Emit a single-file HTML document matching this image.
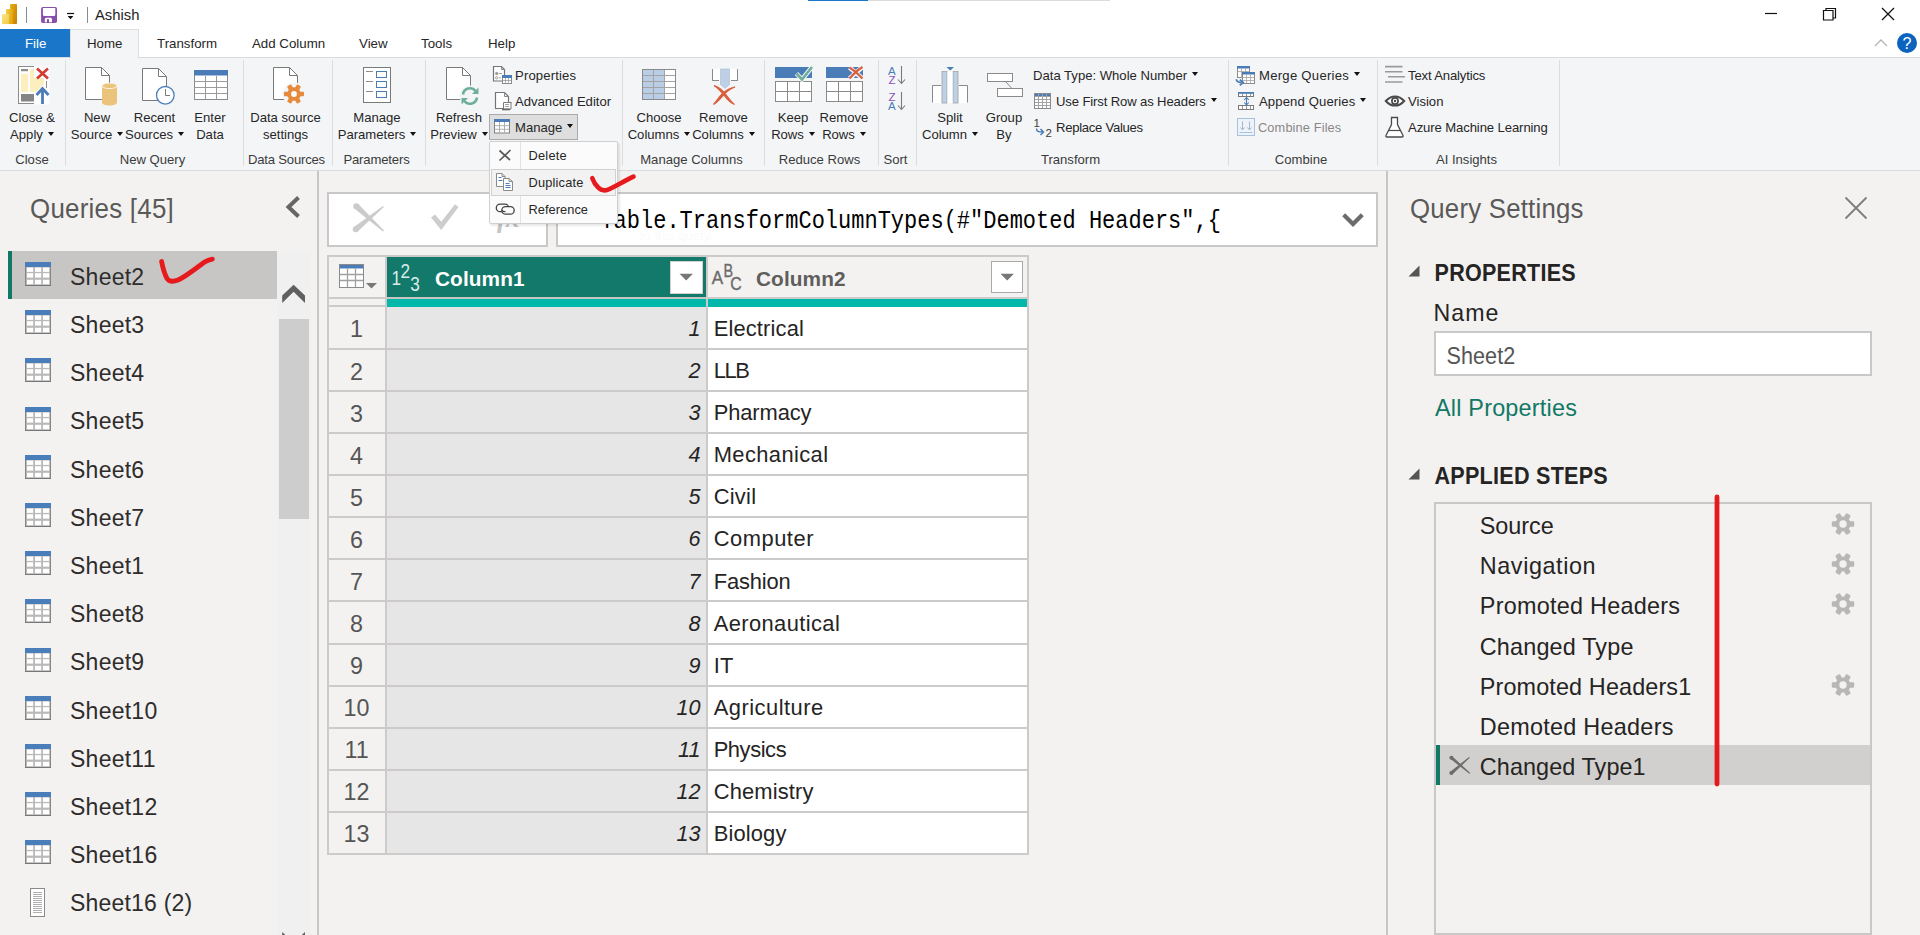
<!DOCTYPE html>
<html lang="en">
<head>
<meta charset="utf-8">
<title>Power Query Editor</title>
<style>
*{box-sizing:border-box;margin:0;padding:0}
html,body{width:1920px;height:935px;overflow:hidden;background:#f3f2f1}
body{position:relative;font-family:"Liberation Sans",sans-serif;color:#252423}
.a{position:absolute}
.t{position:absolute;white-space:nowrap;line-height:20px;height:20px}
/* ribbon text */
.r{font-size:13.1px;color:#262626}
.rc{position:absolute;text-align:center;white-space:nowrap;font-size:13.1px;line-height:17px;color:#262626}
.gl{position:absolute;text-align:center;white-space:nowrap;font-size:13.1px;line-height:20px;color:#3b3b3b}
.sep{position:absolute;top:60px;height:106px;width:1px;background:#dcdddf}
.dd{display:inline-block;width:0;height:0;border-left:3.5px solid transparent;border-right:3.5px solid transparent;border-top:4px solid #111;vertical-align:middle;margin-left:5px;position:relative;top:-2px}
svg{position:absolute;overflow:visible}
/* queries list */
.q{position:absolute;left:70px;font-size:23px;letter-spacing:0.25px;line-height:30px;height:30px;white-space:nowrap;color:#2e2d2c}
/* table */
.idx{position:absolute;left:328px;width:57px;text-align:center;font-size:23.3px;line-height:30px;color:#555}
.c1{position:absolute;left:387px;width:313.5px;text-align:right;font-size:21.6px;line-height:30px;font-style:italic;color:#252423}
.c2{position:absolute;left:713.7px;font-size:21.9px;letter-spacing:0.15px;line-height:30px;color:#252423;white-space:nowrap}
.hl{position:absolute;left:329px;width:698px;height:2px;background:#cfcfcf}
.st{position:absolute;left:1481px;font-size:22.2px;line-height:30px;white-space:nowrap;color:#252423}
</style>
</head>
<body>
<!-- ===== title bar ===== -->
<div class="a" id="titlebar" style="left:0;top:0;width:1920px;height:30px;background:#fff"></div>
<div class="a" style="left:808px;top:0;width:60px;height:1px;background:#1976c8"></div>
<div class="a" style="left:868px;top:0;width:242px;height:1px;background:#dcdcdc"></div>
<div class="a" style="left:26px;top:7px;width:1px;height:16px;background:#8a8a8a"></div>
<div class="a" style="left:87px;top:7px;width:1px;height:16px;background:#8a8a8a"></div>
<div class="t" style="left:95px;top:5px;font-size:14.8px;color:#1e1e1e">Ashish</div>

<!-- ===== tab row ===== -->
<div class="a" style="left:0;top:30px;width:1920px;height:27px;background:#fff"></div>
<div class="a" style="left:0;top:57px;width:1920px;height:1px;background:#d9dadb"></div>
<div class="a" style="left:0;top:29px;width:70px;height:28px;background:#1976c8"></div>
<div class="a" style="left:70px;top:29px;width:69px;height:29px;background:#f4f5f7;border:1px solid #dcddde;border-bottom:none"></div>
<div class="t" style="left:25px;top:34px;font-size:13.3px;color:#fff">File</div>
<div class="t" style="left:87px;top:34px;font-size:13.3px;color:#262626">Home</div>
<div class="t" style="left:157px;top:34px;font-size:13.3px;color:#262626">Transform</div>
<div class="t" style="left:252px;top:34px;font-size:13.3px;color:#262626">Add Column</div>
<div class="t" style="left:359px;top:34px;font-size:13.3px;color:#262626">View</div>
<div class="t" style="left:421px;top:34px;font-size:13.3px;color:#262626">Tools</div>
<div class="t" style="left:488px;top:34px;font-size:13.3px;color:#262626">Help</div>

<!-- ===== ribbon ===== -->
<div class="a" id="ribbon" style="left:0;top:58px;width:1920px;height:112px;background:#f4f5f7"></div>
<div class="a" style="left:0;top:170px;width:1920px;height:1px;background:#dadbdc"></div>
<div class="sep" style="left:65px"></div>
<div class="sep" style="left:243px"></div>
<div class="sep" style="left:332px"></div>
<div class="sep" style="left:425px"></div>
<div class="sep" style="left:622px"></div>
<div class="sep" style="left:764px"></div>
<div class="sep" style="left:878px"></div>
<div class="sep" style="left:916px"></div>
<div class="sep" style="left:1228px"></div>
<div class="sep" style="left:1377px"></div>
<div class="sep" style="left:1559px"></div>

<!-- ribbon text -->
<div class="t r" style="left:515px;top:117.5px;z-index:3">Manage<i class="dd"></i></div>
<div class="rc" style="left:-28px;top:109px;width:120px">Close &amp;<br>Apply<i class="dd"></i></div>
<div class="rc" style="left:37px;top:109px;width:120px">New<br>Source<i class="dd"></i></div>
<div class="rc" style="left:94.5px;top:109px;width:120px">Recent<br>Sources<i class="dd"></i></div>
<div class="rc" style="left:150px;top:109px;width:120px">Enter<br>Data</div>
<div class="rc" style="left:225.5px;top:109px;width:120px">Data source<br>settings</div>
<div class="rc" style="left:317px;top:109px;width:120px">Manage<br>Parameters<i class="dd"></i></div>
<div class="rc" style="left:399px;top:109px;width:120px">Refresh<br>Preview<i class="dd"></i></div>
<div class="rc" style="left:599px;top:109px;width:120px">Choose<br>Columns<i class="dd"></i></div>
<div class="rc" style="left:663.5px;top:109px;width:120px">Remove<br>Columns<i class="dd"></i></div>
<div class="rc" style="left:733px;top:109px;width:120px">Keep<br>Rows<i class="dd"></i></div>
<div class="rc" style="left:784px;top:109px;width:120px">Remove<br>Rows<i class="dd"></i></div>
<div class="rc" style="left:890px;top:109px;width:120px">Split<br>Column<i class="dd"></i></div>
<div class="rc" style="left:944px;top:109px;width:120px">Group<br>By</div>
<div class="gl" style="left:-38px;top:150px;width:140px">Close</div>
<div class="gl" style="left:82.5px;top:150px;width:140px">New Query</div>
<div class="gl" style="left:216.5px;top:150px;width:140px;letter-spacing:-0.2px">Data Sources</div>
<div class="gl" style="left:306.5px;top:150px;width:140px;letter-spacing:-0.15px">Parameters</div>
<div class="gl" style="left:621.5px;top:150px;width:140px">Manage Columns</div>
<div class="gl" style="left:749.5px;top:150px;width:140px">Reduce Rows</div>
<div class="gl" style="left:825.5px;top:150px;width:140px">Sort</div>
<div class="gl" style="left:1000.5px;top:150px;width:140px">Transform</div>
<div class="gl" style="left:1231px;top:150px;width:140px">Combine</div>
<div class="gl" style="left:1396.5px;top:150px;width:140px">AI Insights</div>
<div class="t r" style="left:515px;top:65.5px;letter-spacing:0.15px">Properties</div>
<div class="t r" style="left:515px;top:91.5px">Advanced Editor</div>
<div class="t r" style="left:1033px;top:65.5px">Data Type: Whole Number<i class="dd"></i></div>
<div class="t r" style="left:1056px;top:91.5px;letter-spacing:-0.13px">Use First Row as Headers<i class="dd"></i></div>
<div class="t r" style="left:1056px;top:117.5px;letter-spacing:-0.28px">Replace Values</div>
<div class="t r" style="left:1259px;top:65.5px;letter-spacing:0.27px">Merge Queries<i class="dd"></i></div>
<div class="t r" style="left:1259px;top:91.5px;letter-spacing:0.13px">Append Queries<i class="dd"></i></div>
<div class="t r" style="left:1258px;top:117.5px;color:#8a8787;font-size:12.800px;letter-spacing:0.12px">Combine Files</div>
<div class="t r" style="left:1408px;top:65.5px;letter-spacing:-0.15px">Text Analytics</div>
<div class="t r" style="left:1408px;top:91.5px">Vision</div>
<div class="t r" style="left:1408px;top:117.5px;letter-spacing:-0.1px">Azure Machine Learning</div>

<svg id="ico" width="1920" height="172" viewBox="0 0 1920 172" style="left:0;top:0">
<defs>
<linearGradient id="pb1" x1="0" y1="0" x2="1" y2="0.300"><stop offset="0" stop-color="#f4d045"/><stop offset="1" stop-color="#e4a813"/></linearGradient>
<linearGradient id="pb2" x1="0" y1="0" x2="1" y2="0.600"><stop offset="0" stop-color="#e9ad12"/><stop offset="1" stop-color="#cc850a"/></linearGradient>
<linearGradient id="pb0" x1="0" y1="0" x2="1" y2="1"><stop offset="0" stop-color="#f8e58a"/><stop offset="1" stop-color="#f1cb42"/></linearGradient>
</defs>
<!-- power bi logo -->
<rect x="10.100" y="4" width="6.900" height="20" rx="0.800" fill="url(#pb2)"/>
<rect x="6" y="8.900" width="6.900" height="15.100" rx="0.800" fill="url(#pb1)"/>
<rect x="2" y="14" width="6.900" height="10" rx="0.800" fill="url(#pb0)"/>
<!-- save -->
<rect x="41.100" y="6.900" width="15.900" height="16.100" rx="1.800" fill="#8750ad"/>
<path d="M42.900 8h12.400v6.400a1.500 1.500 0 0 1 -1.500 1.500h-9.400a1.500 1.500 0 0 1 -1.500 -1.500z" fill="#fff"/>
<path d="M44.800 22.200v-2.900a1.500 1.500 0 0 1 1.500 -1.500h4.200a1.500 1.500 0 0 1 1.500 1.500v2.900h-3v-2.600a0.700 0.700 0 0 0 -0.700 -0.700h-0.700a0.700 0.700 0 0 0 -0.700 0.700v2.600z" fill="#fff"/>
<!-- qat dropdown -->
<rect x="67" y="12.900" width="7.100" height="1.200" fill="#111"/>
<path d="M67.600 16h5.800l-2.900 3.200z" fill="#111"/>
<!-- window controls -->
<path d="M1765 13.500h12" stroke="#111" stroke-width="1.200" fill="none"/>
<path d="M1823.500 10.500h9.500v9.500h-9.500zM1826 10.500v-2h9.500v9.500h-2.500" stroke="#111" stroke-width="1.200" fill="none"/>
<path d="M1882 8l12 12M1894 8l-12 12" stroke="#111" stroke-width="1.300" fill="none"/>
<path d="M1875 46l6-6 6 6" stroke="#b4b4b4" stroke-width="1.300" fill="none"/>
<circle cx="1907" cy="43" r="10" fill="#0b63be"/>
<text x="1907" y="48.800" text-anchor="middle" font-family="Liberation Sans, sans-serif" font-size="16" fill="#fff">?</text>

<!-- Close & Apply -->
<rect x="18.500" y="66.500" width="16" height="37" fill="#fdfdfd" stroke="#8c8c8c" stroke-width="1"/>
<rect x="34" y="66" width="15.500" height="38.500" fill="#fdfdfd"/>
<rect x="21" y="74" width="7" height="18" fill="#fdeebd"/>
<path d="M30 69h4v9h10v6l-8 8h-6z" fill="#fdeebd"/>
<rect x="21" y="69" width="7" height="2.200" fill="#8c8c8c"/>
<rect x="21" y="94" width="13" height="7.500" fill="#858585"/>
<path d="M37 68.500l11 10M48 68.500l-11 10" stroke="#d33a34" stroke-width="2.600" fill="none"/>
<path d="M36.500 95l6-6.500 6 6.500M42.500 89.500v14.500" stroke="#4a7db8" stroke-width="2.800" fill="none"/>
<path d="M46.500 81v7" stroke="#8c8c8c" stroke-width="1"/>

<!-- New Source : page + cylinder -->
<path d="M85.500 67.500h16l8 8v24h-24z" fill="#fff" stroke="#7a7a7a" stroke-width="1"/>
<path d="M101.500 67.500v8h8" fill="none" stroke="#7a7a7a" stroke-width="1"/>
<path d="M102 86v16.500c0 1.700 3.400 3 7.500 3s7.500-1.300 7.500-3v-16.500z" fill="#e9c47a"/>
<ellipse cx="109.500" cy="85.800" rx="7.500" ry="2.800" fill="#eac57c" stroke="#fdf6e6" stroke-width="1"/>
<!-- Recent Sources : page + clock -->
<path d="M142.500 68.500h16l8 8v24h-24z" fill="#fff" stroke="#7a7a7a" stroke-width="1"/>
<path d="M158.500 68.500v8h8" fill="none" stroke="#7a7a7a" stroke-width="1"/>
<circle cx="165.300" cy="95.300" r="8.800" fill="#fff" stroke="#4c80bd" stroke-width="1.300"/>
<path d="M165.500 89v6.500h4.500" fill="none" stroke="#7a7a7a" stroke-width="1"/>
<!-- Enter Data : table -->
<rect x="194.500" y="70.500" width="33" height="29" fill="#fff" stroke="#8a8a8a" stroke-width="1"/>
<rect x="194" y="70" width="34" height="5.500" fill="#4a7db8"/>
<path d="M194.500 81.500h33M194.500 87.500h33M194.500 93.500h33M205.500 76v23.500M216.500 76v23.500" stroke="#9a9a9a" stroke-width="1" fill="none"/>

<!-- Data source settings : page + gear -->
<path d="M273.500 67.500h16l8 8v24h-24z" fill="#fff" stroke="#7a7a7a" stroke-width="1"/>
<path d="M289.500 67.500v8h8" fill="none" stroke="#7a7a7a" stroke-width="1"/>
<circle cx="294" cy="94" r="11.500" fill="#f4f5f7"/>
<g transform="translate(294 94) rotate(90)" fill="#e68a3c">
<circle r="6.800"/>
<rect x="-2.300" y="-10" width="4.600" height="20" rx="0.800"/>
<rect x="-2.300" y="-10" width="4.600" height="20" rx="0.800" transform="rotate(60)"/>
<rect x="-2.300" y="-10" width="4.600" height="20" rx="0.800" transform="rotate(120)"/>
<circle r="2.900" fill="#fff"/>
</g>
<rect x="283" y="83" width="0" height="0"/>

<!-- Manage Parameters -->
<rect x="363.500" y="67.500" width="27" height="35" fill="#fff" stroke="#7a7a7a" stroke-width="1"/>
<path d="M366 71.500h7M366 81.500h7M366 91.500h7" stroke="#8c8c8c" stroke-width="1" fill="none"/>
<rect x="376.500" y="71.500" width="10" height="6" fill="#fff" stroke="#4a7db8" stroke-width="1"/>
<rect x="376.500" y="81.500" width="10" height="6" fill="#fff" stroke="#4a7db8" stroke-width="1"/>
<rect x="376.500" y="91.500" width="10" height="6" fill="#fff" stroke="#4a7db8" stroke-width="1"/>

<!-- Refresh Preview -->
<path d="M446.500 67.500h16l8 8v24h-24z" fill="#fff" stroke="#7a7a7a" stroke-width="1"/>
<path d="M462.500 67.500v8h8" fill="none" stroke="#7a7a7a" stroke-width="1"/>
<circle cx="470" cy="96" r="10.500" fill="#f4f5f7"/>
<path d="M463 94.500a7 7 0 0 1 12.500-3.500" fill="none" stroke="#6fae9b" stroke-width="2.600"/>
<path d="M478.500 87.500v6.500h-6.500z" fill="#6fae9b"/>
<path d="M477 97.500a7 7 0 0 1 -12.500 3.500" fill="none" stroke="#6fae9b" stroke-width="2.600"/>
<path d="M461.500 104.500v-6.500h6.500z" fill="#6fae9b"/>
<!-- Properties small icon -->
<path d="M493.500 66.500h8l3 3v11.500h-11z" fill="#fff" stroke="#747474" stroke-width="1.200"/>
<path d="M501.500 66.500v3h3" fill="none" stroke="#8a8a8a"/>
<circle cx="496.700" cy="73.500" r="1.300" fill="#9a9a9a" stroke="#8a8a8a" stroke-width="0.600"/>
<circle cx="496.700" cy="77.800" r="1.200" fill="none" stroke="#8a8a8a" stroke-width="0.800"/>
<path d="M499 73.500h3M499 77.800h2" stroke="#8a8a8a" stroke-width="0.800"/>
<rect x="502.500" y="75.500" width="9" height="8" fill="#fff" stroke="#8a8a8a" stroke-width="1"/>
<rect x="502" y="75" width="10" height="3" fill="#4a7db8"/>
<path d="M505.500 78v5.500M508.500 78v5.500M502.500 80.500h9" stroke="#9a9a9a" stroke-width="0.800"/>
<!-- Advanced Editor small icon -->
<path d="M495.500 92.500h9l4 4v12h-13z" fill="#fff" stroke="#747474" stroke-width="1.200"/>
<path d="M504.500 92.500v4h4" fill="none" stroke="#8a8a8a"/>
<path d="M503.500 102.500h7.500v6.500h-7.500z" fill="#fff" stroke="#7a7a7a" stroke-width="1"/>
<path d="M505 104.500h4M505 106.500h4" stroke="#8a8a8a" stroke-width="0.800"/>
<path d="M502 109.500h8" stroke="#6a6a6a" stroke-width="1.600"/>
<path d="M508 102.500h3.500" stroke="#7a7a7a" stroke-width="1"/>
<!-- Manage button -->
<rect x="489.500" y="114.500" width="88" height="25" fill="#dddedd" stroke="#a9aaab" stroke-width="1"/>
<rect x="494.500" y="119.500" width="15" height="13.500" fill="#fff" stroke="#808080" stroke-width="1"/>
<rect x="494" y="119" width="16" height="3" fill="#4a7db8"/>
<path d="M494.500 125.700h15M494.500 129.300h15M499.500 122v10.500M504.500 122v10.500" stroke="#a6a6a6" stroke-width="0.900"/>

<!-- Choose Columns -->
<rect x="642.500" y="69.500" width="33" height="30" fill="#fff" stroke="#8a8a8a" stroke-width="1"/>
<rect x="643" y="70" width="22" height="29" fill="#b9cee6"/>
<path d="M642.500 75.500h33M642.500 81.500h33M642.500 87.500h33M642.500 93.500h33M653.500 70v29.500M664.500 70v29.500" stroke="#a3a3a3" stroke-width="1" fill="none"/>
<rect x="642.500" y="69.500" width="33" height="30" fill="none" stroke="#8a8a8a" stroke-width="1"/>
<!-- Remove Columns -->
<path d="M712.500 69.500v11h6.500M737.500 69.500v11h-6.500" fill="#fff" stroke="#8a8a8a" stroke-width="1"/>
<rect x="713" y="69" width="24" height="11" fill="#fff"/>
<path d="M712.500 69v11.500h6M737.500 69v11.500h-6" fill="none" stroke="#8a8a8a" stroke-width="1"/>
<path d="M720.500 69v15.500l4.500 4 4.500-4v-15.500z" fill="#bdd0e6" stroke="#a9b9cc" stroke-width="0.600"/>
<path d="M714 85.500c4 1 8 4 11.500 8.500c3 4 6 8 9 10.500c-3-1-6-3.500-9.500-8c-3.500-4.500-7-8.500-11-11z" fill="#d9603e" stroke="#d9603e" stroke-width="1.200"/>
<path d="M735 87c-5 2-9 5-12 8.500c-3 3.500-6 7-9.500 9c3-3.500 5-7 8.500-10.500c3.500-3.500 8-6 13-7z" fill="#d9603e" stroke="#d9603e" stroke-width="1.200"/>

<!-- Keep Rows -->
<rect x="775" y="67" width="37" height="11" fill="#4a7db8"/>
<rect x="775.500" y="81.500" width="36" height="20" fill="#fff" stroke="#8a8a8a" stroke-width="1"/>
<path d="M775.500 91.500h36M787.500 81.500v20M799.500 81.500v20" stroke="#8a8a8a" stroke-width="1"/>
<path d="M796.500 73.500l5.500 6 10-12.500" fill="none" stroke="#f4f5f7" stroke-width="4.500"/>
<path d="M796.500 73.500l5.500 6 10-12.500" fill="none" stroke="#6fae9b" stroke-width="2.600"/>
<!-- Remove Rows -->
<rect x="826" y="67" width="37" height="11" fill="#4a7db8"/>
<rect x="826.500" y="81.500" width="36" height="20" fill="#fff" stroke="#8a8a8a" stroke-width="1"/>
<path d="M826.500 91.500h36M838.500 81.500v20M850.500 81.500v20" stroke="#8a8a8a" stroke-width="1"/>
<path d="M849.500 67.500l13 11M862.500 67l-13 11.500" fill="none" stroke="#f4f5f7" stroke-width="4.500"/>
<path d="M849.500 67.500c5 3 9 6.500 13 11M862.500 67c-5 3-9 7-13 11.500" fill="none" stroke="#d9603e" stroke-width="2.200"/>

<!-- Sort -->
<text x="888" y="75" font-family="Liberation Sans, sans-serif" font-size="11.500" fill="#4a7db8">A</text>
<text x="888.500" y="84" font-family="Liberation Sans, sans-serif" font-size="11.500" fill="#8b50b7">Z</text>
<path d="M901.500 66v17M898 79.500l3.500 4 3.500-4" fill="none" stroke="#7a7a7a" stroke-width="1.100"/>
<text x="888.500" y="100.500" font-family="Liberation Sans, sans-serif" font-size="11.500" fill="#8b50b7">Z</text>
<text x="888" y="110" font-family="Liberation Sans, sans-serif" font-size="11.500" fill="#4a7db8">A</text>
<path d="M901.500 92v17M898 105.500l3.500 4 3.500-4" fill="none" stroke="#7a7a7a" stroke-width="1.100"/>

<!-- Split Column -->
<path d="M932.500 102.500v-17h8.500M967.500 102.500v-17h-8.500" fill="none" stroke="#8a8a8a" stroke-width="1"/>
<rect x="933" y="86" width="8" height="17" fill="#fff"/>
<rect x="959" y="86" width="8" height="17" fill="#fff"/>
<rect x="942" y="71.500" width="5" height="31.500" fill="#bdd0e6" stroke="#a3a3a3" stroke-width="0.800"/>
<rect x="953" y="71.500" width="5" height="31.500" fill="#bdd0e6" stroke="#a3a3a3" stroke-width="0.800"/>
<rect x="947.500" y="71" width="5" height="32" fill="#fff"/>
<path d="M946.500 67h7.500l-3.750 3.500z" fill="#4a7db8"/>
<!-- Group By -->
<rect x="987.500" y="73.500" width="25" height="8" fill="#fff" stroke="#8a8a8a" stroke-width="1"/>
<rect x="997.500" y="88.500" width="25" height="8" fill="#fff" stroke="#8a8a8a" stroke-width="1"/>
<path d="M1005.500 81.500l6 6.500" stroke="#8a8a8a" stroke-width="1" fill="none"/>
<!-- Use First Row as Headers icon -->
<rect x="1034.500" y="93.500" width="16" height="15" fill="#fff" stroke="#8a8a8a" stroke-width="1"/>
<rect x="1035" y="94" width="15" height="2.500" fill="#4a7db8"/>
<path d="M1034.500 96.500h16M1034.500 99.500h16M1034.500 102.500h16M1034.500 105.500h16M1038.500 94v14.500M1042.500 94v14.500M1046.500 94v14.500" stroke="#a3a3a3" stroke-width="1" fill="none"/>
<rect x="1034.500" y="93.500" width="16" height="15" fill="none" stroke="#8a8a8a" stroke-width="1"/>
<!-- Replace Values icon -->
<text x="1033.500" y="126.500" font-family="Liberation Sans, sans-serif" font-size="11.500" fill="#3a3a3a">1</text>
<text x="1045.500" y="136.500" font-family="Liberation Sans, sans-serif" font-size="11.500" fill="#3a3a3a">2</text>
<path d="M1036.500 128.500c0 3 2 3.500 6.500 3.500M1040.500 129l3 3-3 3" fill="none" stroke="#4a7db8" stroke-width="1.500"/>
<!-- Merge Queries icon -->
<rect x="1237.500" y="66.500" width="12" height="11" fill="#fff" stroke="#8a8a8a" stroke-width="1"/>
<rect x="1237" y="66" width="13" height="2.500" fill="#4a7db8"/>
<path d="M1237.500 71.500h12M1241.500 68.500v9M1245.500 68.500v9" stroke="#a3a3a3" stroke-width="0.800"/>
<rect x="1242.500" y="72.500" width="12" height="11" fill="#fff" stroke="#8a8a8a" stroke-width="1"/>
<rect x="1242" y="72" width="13" height="2.500" fill="#4a7db8"/>
<path d="M1242.500 77.500h12M1242.500 80.500h12M1246.500 74.500v9M1250.500 74.500v9" stroke="#a3a3a3" stroke-width="0.800"/>
<path d="M1236.300 79.200c0.200 2.600 1.800 3.300 5.300 3.300" fill="none" stroke="#4a7db8" stroke-width="1.800"/><path d="M1239.800 79.600l3.400 2.900-3.400 2.900" fill="none" stroke="#4a7db8" stroke-width="1.800"/>
<!-- Append Queries icon -->
<rect x="1238.500" y="92.500" width="15" height="4" fill="#fff" stroke="#7a7a7a" stroke-width="1"/>
<rect x="1238" y="92" width="16" height="1.800" fill="#4a7db8"/>
<path d="M1242.500 93.500v3M1246.500 93.500v3M1250.500 93.500v3" stroke="#7a7a7a" stroke-width="0.800"/>
<rect x="1238.500" y="105.500" width="15" height="4" fill="#fff" stroke="#7a7a7a" stroke-width="1"/>
<path d="M1242.500 105.500v4M1246.500 105.500v4M1250.500 105.500v4" stroke="#7a7a7a" stroke-width="0.800"/>
<path d="M1246.500 97.500v7.500M1244.200 100l2.300-2.500 2.300 2.500M1244.200 102.500l2.300 2.500 2.300-2.500" fill="none" stroke="#4a7db8" stroke-width="1.100"/>
<!-- Combine Files icon -->
<rect x="1237.500" y="118.500" width="17" height="17" fill="#eef3fa" stroke="#a9c0de" stroke-width="1"/>
<path d="M1242.500 121.500v8M1240.500 127.500l2 2.500 2-2.500M1249.500 121.500v8M1247.500 127.500l2 2.500 2-2.500" fill="none" stroke="#a6b7cd" stroke-width="1"/>
<path d="M1239.500 132.500h13" stroke="#a9c0de" stroke-width="1"/>
<!-- Text Analytics icon -->
<path d="M1385 66.600h17.500M1385 71.700h17.500M1388 76.800h17M1385 82h17.500" stroke="#9a9a9a" stroke-width="1.600" fill="none"/>
<!-- Vision icon -->
<path d="M1385.800 101c3-3.400 5.800-4.600 9.200-4.600s6.200 1.200 9.200 4.600c-3 3.400-5.800 4.600-9.200 4.600s-6.200-1.200-9.200-4.600z" fill="#fff" stroke="#4a4a4a" stroke-width="2"/>
<circle cx="1395" cy="101" r="3.100" fill="#fff" stroke="#4a4a4a" stroke-width="1.700"/>
<circle cx="1395" cy="101" r="1.200" fill="#4a4a4a"/>
<!-- Azure ML flask -->
<path d="M1391.500 117.500h6v7l5.500 11q0.500 1.500-1 1.500h-15q-1.500 0-1-1.500l5.500-11z" fill="#fff" stroke="#4a4a4a" stroke-width="1.300"/>
<path d="M1388 130.500h13" stroke="#4a4a4a" stroke-width="1.200"/>


</svg>

<!-- ===== left pane ===== -->
<div class="a" style="left:317px;top:171px;width:2px;height:764px;background:#c8c6c4"></div>
<div class="t" style="left:30px;top:190px;height:36px;line-height:36px;font-size:25.900px;letter-spacing:0.250px;transform:scaleY(1.07);color:#5a5958">Queries [45]</div>
<svg width="20" height="26" style="left:283px;top:194px" viewBox="283 194 20 26"><path d="M298.500 197.500l-10 9.500 10 9.500" fill="none" stroke="#666" stroke-width="4"/></svg>
<div class="a" style="left:8px;top:251px;width:269px;height:48px;background:#c8c6c4"></div>
<div class="a" style="left:8px;top:251px;width:4px;height:48px;background:#117865"></div>
<div class="a" style="left:277px;top:251px;width:34px;height:684px;background:#f0f0f0"></div>
<div class="a" style="left:279px;top:319px;width:30px;height:200px;background:#cdcdcd"></div>
<svg width="30" height="24" style="left:280px;top:282px" viewBox="280 282 30 24"><path d="M293.600 284.800l11.400 10.700v7.500l-11.400-11.200l-11.400 11.200v-7.500z" fill="#606060"/></svg>
<svg width="30" height="10" style="left:280px;top:926px" viewBox="280 926 30 10"><path d="M282.200 939.500l11.400 10.700 11.400-10.700v-7.500l-11.400 10.700-11.400-10.700z" fill="#606060"/></svg>
<div class="q" style="top:261.8px">Sheet2</div>
<svg width="27" height="25" style="left:25px;top:262px" viewBox="0 0 27 25"><rect x="0" y="0" width="26" height="24" fill="#b9b9b9"/><rect x="0" y="0" width="26" height="5" fill="#4a7ebb"/><rect x="2" y="5.5" width="6.200" height="4.4" fill="#fff"/><rect x="2" y="11.2" width="6.200" height="4.4" fill="#fff"/><rect x="2" y="17.8" width="6.200" height="4.4" fill="#fff"/><rect x="10" y="5.5" width="6.200" height="4.4" fill="#fff"/><rect x="10" y="11.2" width="6.200" height="4.4" fill="#fff"/><rect x="10" y="17.8" width="6.200" height="4.4" fill="#fff"/><rect x="18" y="5.5" width="6.200" height="4.4" fill="#fff"/><rect x="18" y="11.2" width="6.200" height="4.4" fill="#fff"/><rect x="18" y="17.8" width="6.200" height="4.4" fill="#fff"/><path d="M0.500 5v18.500h25v-18.500" fill="none" stroke="#858585" stroke-width="1"/><path d="M0 23.500h26" stroke="#777" stroke-width="1"/></svg>
<div class="q" style="top:310.0px">Sheet3</div>
<svg width="27" height="25" style="left:25px;top:310px" viewBox="0 0 27 25"><rect x="0" y="0" width="26" height="24" fill="#b9b9b9"/><rect x="0" y="0" width="26" height="5" fill="#4a7ebb"/><rect x="2" y="5.5" width="6.200" height="4.4" fill="#fff"/><rect x="2" y="11.2" width="6.200" height="4.4" fill="#fff"/><rect x="2" y="17.8" width="6.200" height="4.4" fill="#fff"/><rect x="10" y="5.5" width="6.200" height="4.4" fill="#fff"/><rect x="10" y="11.2" width="6.200" height="4.4" fill="#fff"/><rect x="10" y="17.8" width="6.200" height="4.4" fill="#fff"/><rect x="18" y="5.5" width="6.200" height="4.4" fill="#fff"/><rect x="18" y="11.2" width="6.200" height="4.4" fill="#fff"/><rect x="18" y="17.8" width="6.200" height="4.4" fill="#fff"/><path d="M0.500 5v18.500h25v-18.500" fill="none" stroke="#858585" stroke-width="1"/><path d="M0 23.500h26" stroke="#777" stroke-width="1"/></svg>
<div class="q" style="top:358.2px">Sheet4</div>
<svg width="27" height="25" style="left:25px;top:358px" viewBox="0 0 27 25"><rect x="0" y="0" width="26" height="24" fill="#b9b9b9"/><rect x="0" y="0" width="26" height="5" fill="#4a7ebb"/><rect x="2" y="5.5" width="6.200" height="4.4" fill="#fff"/><rect x="2" y="11.2" width="6.200" height="4.4" fill="#fff"/><rect x="2" y="17.8" width="6.200" height="4.4" fill="#fff"/><rect x="10" y="5.5" width="6.200" height="4.4" fill="#fff"/><rect x="10" y="11.2" width="6.200" height="4.4" fill="#fff"/><rect x="10" y="17.8" width="6.200" height="4.4" fill="#fff"/><rect x="18" y="5.5" width="6.200" height="4.4" fill="#fff"/><rect x="18" y="11.2" width="6.200" height="4.4" fill="#fff"/><rect x="18" y="17.8" width="6.200" height="4.4" fill="#fff"/><path d="M0.500 5v18.500h25v-18.500" fill="none" stroke="#858585" stroke-width="1"/><path d="M0 23.500h26" stroke="#777" stroke-width="1"/></svg>
<div class="q" style="top:406.4px">Sheet5</div>
<svg width="27" height="25" style="left:25px;top:407px" viewBox="0 0 27 25"><rect x="0" y="0" width="26" height="24" fill="#b9b9b9"/><rect x="0" y="0" width="26" height="5" fill="#4a7ebb"/><rect x="2" y="5.5" width="6.200" height="4.4" fill="#fff"/><rect x="2" y="11.2" width="6.200" height="4.4" fill="#fff"/><rect x="2" y="17.8" width="6.200" height="4.4" fill="#fff"/><rect x="10" y="5.5" width="6.200" height="4.4" fill="#fff"/><rect x="10" y="11.2" width="6.200" height="4.4" fill="#fff"/><rect x="10" y="17.8" width="6.200" height="4.4" fill="#fff"/><rect x="18" y="5.5" width="6.200" height="4.4" fill="#fff"/><rect x="18" y="11.2" width="6.200" height="4.4" fill="#fff"/><rect x="18" y="17.8" width="6.200" height="4.4" fill="#fff"/><path d="M0.500 5v18.500h25v-18.500" fill="none" stroke="#858585" stroke-width="1"/><path d="M0 23.500h26" stroke="#777" stroke-width="1"/></svg>
<div class="q" style="top:454.6px">Sheet6</div>
<svg width="27" height="25" style="left:25px;top:455px" viewBox="0 0 27 25"><rect x="0" y="0" width="26" height="24" fill="#b9b9b9"/><rect x="0" y="0" width="26" height="5" fill="#4a7ebb"/><rect x="2" y="5.5" width="6.200" height="4.4" fill="#fff"/><rect x="2" y="11.2" width="6.200" height="4.4" fill="#fff"/><rect x="2" y="17.8" width="6.200" height="4.4" fill="#fff"/><rect x="10" y="5.5" width="6.200" height="4.4" fill="#fff"/><rect x="10" y="11.2" width="6.200" height="4.4" fill="#fff"/><rect x="10" y="17.8" width="6.200" height="4.4" fill="#fff"/><rect x="18" y="5.5" width="6.200" height="4.4" fill="#fff"/><rect x="18" y="11.2" width="6.200" height="4.4" fill="#fff"/><rect x="18" y="17.8" width="6.200" height="4.4" fill="#fff"/><path d="M0.500 5v18.500h25v-18.500" fill="none" stroke="#858585" stroke-width="1"/><path d="M0 23.500h26" stroke="#777" stroke-width="1"/></svg>
<div class="q" style="top:502.8px">Sheet7</div>
<svg width="27" height="25" style="left:25px;top:503px" viewBox="0 0 27 25"><rect x="0" y="0" width="26" height="24" fill="#b9b9b9"/><rect x="0" y="0" width="26" height="5" fill="#4a7ebb"/><rect x="2" y="5.5" width="6.200" height="4.4" fill="#fff"/><rect x="2" y="11.2" width="6.200" height="4.4" fill="#fff"/><rect x="2" y="17.8" width="6.200" height="4.4" fill="#fff"/><rect x="10" y="5.5" width="6.200" height="4.4" fill="#fff"/><rect x="10" y="11.2" width="6.200" height="4.4" fill="#fff"/><rect x="10" y="17.8" width="6.200" height="4.4" fill="#fff"/><rect x="18" y="5.5" width="6.200" height="4.4" fill="#fff"/><rect x="18" y="11.2" width="6.200" height="4.4" fill="#fff"/><rect x="18" y="17.8" width="6.200" height="4.4" fill="#fff"/><path d="M0.500 5v18.500h25v-18.500" fill="none" stroke="#858585" stroke-width="1"/><path d="M0 23.500h26" stroke="#777" stroke-width="1"/></svg>
<div class="q" style="top:551.0px">Sheet1</div>
<svg width="27" height="25" style="left:25px;top:551px" viewBox="0 0 27 25"><rect x="0" y="0" width="26" height="24" fill="#b9b9b9"/><rect x="0" y="0" width="26" height="5" fill="#4a7ebb"/><rect x="2" y="5.5" width="6.200" height="4.4" fill="#fff"/><rect x="2" y="11.2" width="6.200" height="4.4" fill="#fff"/><rect x="2" y="17.8" width="6.200" height="4.4" fill="#fff"/><rect x="10" y="5.5" width="6.200" height="4.4" fill="#fff"/><rect x="10" y="11.2" width="6.200" height="4.4" fill="#fff"/><rect x="10" y="17.8" width="6.200" height="4.4" fill="#fff"/><rect x="18" y="5.5" width="6.200" height="4.4" fill="#fff"/><rect x="18" y="11.2" width="6.200" height="4.4" fill="#fff"/><rect x="18" y="17.8" width="6.200" height="4.4" fill="#fff"/><path d="M0.500 5v18.500h25v-18.500" fill="none" stroke="#858585" stroke-width="1"/><path d="M0 23.500h26" stroke="#777" stroke-width="1"/></svg>
<div class="q" style="top:599.2px">Sheet8</div>
<svg width="27" height="25" style="left:25px;top:599px" viewBox="0 0 27 25"><rect x="0" y="0" width="26" height="24" fill="#b9b9b9"/><rect x="0" y="0" width="26" height="5" fill="#4a7ebb"/><rect x="2" y="5.5" width="6.200" height="4.4" fill="#fff"/><rect x="2" y="11.2" width="6.200" height="4.4" fill="#fff"/><rect x="2" y="17.8" width="6.200" height="4.4" fill="#fff"/><rect x="10" y="5.5" width="6.200" height="4.4" fill="#fff"/><rect x="10" y="11.2" width="6.200" height="4.4" fill="#fff"/><rect x="10" y="17.8" width="6.200" height="4.4" fill="#fff"/><rect x="18" y="5.5" width="6.200" height="4.4" fill="#fff"/><rect x="18" y="11.2" width="6.200" height="4.4" fill="#fff"/><rect x="18" y="17.8" width="6.200" height="4.4" fill="#fff"/><path d="M0.500 5v18.500h25v-18.500" fill="none" stroke="#858585" stroke-width="1"/><path d="M0 23.500h26" stroke="#777" stroke-width="1"/></svg>
<div class="q" style="top:647.4px">Sheet9</div>
<svg width="27" height="25" style="left:25px;top:648px" viewBox="0 0 27 25"><rect x="0" y="0" width="26" height="24" fill="#b9b9b9"/><rect x="0" y="0" width="26" height="5" fill="#4a7ebb"/><rect x="2" y="5.5" width="6.200" height="4.4" fill="#fff"/><rect x="2" y="11.2" width="6.200" height="4.4" fill="#fff"/><rect x="2" y="17.8" width="6.200" height="4.4" fill="#fff"/><rect x="10" y="5.5" width="6.200" height="4.4" fill="#fff"/><rect x="10" y="11.2" width="6.200" height="4.4" fill="#fff"/><rect x="10" y="17.8" width="6.200" height="4.4" fill="#fff"/><rect x="18" y="5.5" width="6.200" height="4.4" fill="#fff"/><rect x="18" y="11.2" width="6.200" height="4.4" fill="#fff"/><rect x="18" y="17.8" width="6.200" height="4.4" fill="#fff"/><path d="M0.500 5v18.500h25v-18.500" fill="none" stroke="#858585" stroke-width="1"/><path d="M0 23.500h26" stroke="#777" stroke-width="1"/></svg>
<div class="q" style="top:695.6px">Sheet10</div>
<svg width="27" height="25" style="left:25px;top:696px" viewBox="0 0 27 25"><rect x="0" y="0" width="26" height="24" fill="#b9b9b9"/><rect x="0" y="0" width="26" height="5" fill="#4a7ebb"/><rect x="2" y="5.5" width="6.200" height="4.4" fill="#fff"/><rect x="2" y="11.2" width="6.200" height="4.4" fill="#fff"/><rect x="2" y="17.8" width="6.200" height="4.4" fill="#fff"/><rect x="10" y="5.5" width="6.200" height="4.4" fill="#fff"/><rect x="10" y="11.2" width="6.200" height="4.4" fill="#fff"/><rect x="10" y="17.8" width="6.200" height="4.4" fill="#fff"/><rect x="18" y="5.5" width="6.200" height="4.4" fill="#fff"/><rect x="18" y="11.2" width="6.200" height="4.4" fill="#fff"/><rect x="18" y="17.8" width="6.200" height="4.4" fill="#fff"/><path d="M0.500 5v18.500h25v-18.500" fill="none" stroke="#858585" stroke-width="1"/><path d="M0 23.500h26" stroke="#777" stroke-width="1"/></svg>
<div class="q" style="top:743.8px">Sheet11</div>
<svg width="27" height="25" style="left:25px;top:744px" viewBox="0 0 27 25"><rect x="0" y="0" width="26" height="24" fill="#b9b9b9"/><rect x="0" y="0" width="26" height="5" fill="#4a7ebb"/><rect x="2" y="5.5" width="6.200" height="4.4" fill="#fff"/><rect x="2" y="11.2" width="6.200" height="4.4" fill="#fff"/><rect x="2" y="17.8" width="6.200" height="4.4" fill="#fff"/><rect x="10" y="5.5" width="6.200" height="4.4" fill="#fff"/><rect x="10" y="11.2" width="6.200" height="4.4" fill="#fff"/><rect x="10" y="17.8" width="6.200" height="4.4" fill="#fff"/><rect x="18" y="5.5" width="6.200" height="4.4" fill="#fff"/><rect x="18" y="11.2" width="6.200" height="4.4" fill="#fff"/><rect x="18" y="17.8" width="6.200" height="4.4" fill="#fff"/><path d="M0.500 5v18.500h25v-18.500" fill="none" stroke="#858585" stroke-width="1"/><path d="M0 23.500h26" stroke="#777" stroke-width="1"/></svg>
<div class="q" style="top:792.0px">Sheet12</div>
<svg width="27" height="25" style="left:25px;top:792px" viewBox="0 0 27 25"><rect x="0" y="0" width="26" height="24" fill="#b9b9b9"/><rect x="0" y="0" width="26" height="5" fill="#4a7ebb"/><rect x="2" y="5.5" width="6.200" height="4.4" fill="#fff"/><rect x="2" y="11.2" width="6.200" height="4.4" fill="#fff"/><rect x="2" y="17.8" width="6.200" height="4.4" fill="#fff"/><rect x="10" y="5.5" width="6.200" height="4.4" fill="#fff"/><rect x="10" y="11.2" width="6.200" height="4.4" fill="#fff"/><rect x="10" y="17.8" width="6.200" height="4.4" fill="#fff"/><rect x="18" y="5.5" width="6.200" height="4.4" fill="#fff"/><rect x="18" y="11.2" width="6.200" height="4.4" fill="#fff"/><rect x="18" y="17.8" width="6.200" height="4.4" fill="#fff"/><path d="M0.500 5v18.500h25v-18.500" fill="none" stroke="#858585" stroke-width="1"/><path d="M0 23.500h26" stroke="#777" stroke-width="1"/></svg>
<div class="q" style="top:840.2px">Sheet16</div>
<svg width="27" height="25" style="left:25px;top:840px" viewBox="0 0 27 25"><rect x="0" y="0" width="26" height="24" fill="#b9b9b9"/><rect x="0" y="0" width="26" height="5" fill="#4a7ebb"/><rect x="2" y="5.5" width="6.200" height="4.4" fill="#fff"/><rect x="2" y="11.2" width="6.200" height="4.4" fill="#fff"/><rect x="2" y="17.8" width="6.200" height="4.4" fill="#fff"/><rect x="10" y="5.5" width="6.200" height="4.4" fill="#fff"/><rect x="10" y="11.2" width="6.200" height="4.4" fill="#fff"/><rect x="10" y="17.8" width="6.200" height="4.4" fill="#fff"/><rect x="18" y="5.5" width="6.200" height="4.4" fill="#fff"/><rect x="18" y="11.2" width="6.200" height="4.4" fill="#fff"/><rect x="18" y="17.8" width="6.200" height="4.4" fill="#fff"/><path d="M0.500 5v18.500h25v-18.500" fill="none" stroke="#858585" stroke-width="1"/><path d="M0 23.500h26" stroke="#777" stroke-width="1"/></svg>
<div class="q" style="top:888.4px;letter-spacing:0.2px">Sheet16 (2)</div>
<svg width="15" height="29" style="left:30px;top:888px" viewBox="0 0 15 29"><rect x="0.500" y="0.500" width="14" height="28" fill="#fff" stroke="#8a8a8a"/><path d="M3 4.500h9M3 6.500h9M3 8.500h9M3 10.500h9M3 12.500h9M3 14.500h9M3 16.500h9M3 18.500h9M3 20.500h9M3 22.500h9M3 24.500h9" stroke="#b0b0b0" stroke-width="1"/></svg>

<!-- ===== formula bar ===== -->
<div class="a" style="left:327px;top:191.500px;width:221px;height:55.300px;background:#fff;border:2px solid #c8c8c8"></div>
<div class="a" style="left:556px;top:191.500px;width:822px;height:55.300px;background:#fff;border:2px solid #c8c8c8"></div>
<svg width="40" height="36" style="left:350px;top:200px" viewBox="350 200 40 36"><g fill="#cbcbcb"><path d="M354 208.200L358 203.800L384 230.500L383 231.500z"/><circle cx="356.300" cy="206.200" r="3"/><path d="M357.400 231.800L353.600 227.200L383.100 206L383.900 207z"/><circle cx="355.800" cy="229.300" r="3"/></g></svg>
<svg width="40" height="36" style="left:426px;top:200px" viewBox="426 200 40 36"><path d="M431 217.400L435 214.500L441.250 221.750L455 204.250L458.500 207L441.250 229.900z" fill="#cdcdcd"/></svg>
<div class="t" style="left:497px;top:203px;height:30px;line-height:30px;font-family:'Liberation Serif',serif;font-style:italic;font-weight:bold;font-size:27px;color:#c4c4c4">fx</div>
<div class="t" style="left:574px;top:204.500px;height:30px;line-height:30px;font-family:'Liberation Mono',monospace;font-size:22px;color:#000;transform-origin:0 0;transform:scaleY(1.14)">= Table.TransformColumnTypes(#"Demoted Headers",{</div>
<div class="t" style="left:640px;top:227px;height:18px;line-height:18px;font-size:13px;color:#fafafa">to this query.</div>
<svg width="30" height="20" style="left:1338px;top:210px" viewBox="1338 210 30 20"><path d="M1343.700 214.700l9.300 9.300 9.300-9.300" fill="none" stroke="#6c6c6c" stroke-width="4.200"/></svg>
<!-- ===== data table ===== -->
<div class="a" style="left:327px;top:255px;width:702px;height:600px;border:2px solid #cdcbc9;background:#f3f2f1"></div>
<div class="a" style="left:387px;top:257px;width:319px;height:40px;background:#13796a"></div>
<div class="a" style="left:387px;top:297px;width:319px;height:2px;background:#c9c5c2"></div>
<div class="a" style="left:387px;top:299px;width:319px;height:8px;background:#01b8aa"></div>
<div class="a" style="left:708px;top:299px;width:319px;height:8px;background:#01b8aa"></div>
<div class="a" style="left:329px;top:297px;width:57px;height:2px;background:#cdcbc9"></div>
<div class="a" style="left:708px;top:297px;width:319px;height:2px;background:#cdcbc9"></div>
<div class="a" style="left:329px;top:305px;width:57px;height:2px;background:#cdcbc9"></div>
<div class="a" style="left:387px;top:307px;width:319px;height:546px;background:#e6e6e6"></div>
<div class="a" style="left:708px;top:307px;width:319px;height:546px;background:#fff"></div>
<div class="a" style="left:385px;top:257px;width:2px;height:596px;background:#cdcbc9"></div>
<div class="a" style="left:706px;top:257px;width:2px;height:596px;background:#cdcbc9"></div>
<div class="hl" style="top:810.9px;background:#cdcbc9"></div>
<div class="hl" style="top:768.8px;background:#cdcbc9"></div>
<div class="hl" style="top:726.7px;background:#cdcbc9"></div>
<div class="hl" style="top:684.6px;background:#cdcbc9"></div>
<div class="hl" style="top:642.5px;background:#cdcbc9"></div>
<div class="hl" style="top:600.4px;background:#cdcbc9"></div>
<div class="hl" style="top:558.3px;background:#cdcbc9"></div>
<div class="hl" style="top:516.2px;background:#cdcbc9"></div>
<div class="hl" style="top:474.1px;background:#cdcbc9"></div>
<div class="hl" style="top:432.0px;background:#cdcbc9"></div>
<div class="hl" style="top:389.9px;background:#cdcbc9"></div>
<div class="hl" style="top:347.8px;background:#cdcbc9"></div>
<div class="idx" style="top:314.4px">1</div><div class="c1" style="top:314.0px">1</div><div class="c2" style="top:314.0px">Electrical</div>
<div class="idx" style="top:356.5px">2</div><div class="c1" style="top:356.1px">2</div><div class="c2" style="top:356.1px;letter-spacing:-1.45px">LLB</div>
<div class="idx" style="top:398.6px">3</div><div class="c1" style="top:398.2px">3</div><div class="c2" style="top:398.2px;letter-spacing:-0.10px">Pharmacy</div>
<div class="idx" style="top:440.6px">4</div><div class="c1" style="top:440.2px">4</div><div class="c2" style="top:440.2px;letter-spacing:0.40px">Mechanical</div>
<div class="idx" style="top:482.7px">5</div><div class="c1" style="top:482.3px">5</div><div class="c2" style="top:482.3px;letter-spacing:0.25px">Civil</div>
<div class="idx" style="top:524.8px">6</div><div class="c1" style="top:524.4px">6</div><div class="c2" style="top:524.4px;letter-spacing:0.52px">Computer</div>
<div class="idx" style="top:566.9px">7</div><div class="c1" style="top:566.5px">7</div><div class="c2" style="top:566.5px;letter-spacing:-0.13px">Fashion</div>
<div class="idx" style="top:609.0px">8</div><div class="c1" style="top:608.6px">8</div><div class="c2" style="top:608.6px;letter-spacing:0.40px">Aeronautical</div>
<div class="idx" style="top:651.0px">9</div><div class="c1" style="top:650.6px">9</div><div class="c2" style="top:650.6px">IT</div>
<div class="idx" style="top:693.1px">10</div><div class="c1" style="top:692.7px">10</div><div class="c2" style="top:692.7px;letter-spacing:0.49px">Agriculture</div>
<div class="idx" style="top:735.2px">11</div><div class="c1" style="top:734.8px">11</div><div class="c2" style="top:734.8px;letter-spacing:-0.42px">Physics</div>
<div class="idx" style="top:777.3px">12</div><div class="c1" style="top:776.9px">12</div><div class="c2" style="top:776.9px">Chemistry</div>
<div class="idx" style="top:819.4px">13</div><div class="c1" style="top:819.0px">13</div><div class="c2" style="top:819.0px">Biology</div>
<svg width="42" height="30" style="left:337px;top:262px" viewBox="337 262 42 30"><rect x="339.500" y="264.500" width="24" height="23" fill="#fff" stroke="#8a8a8a"/><rect x="339" y="264" width="25" height="4.500" fill="#4a7db8"/><path d="M339.500 274.500h24M339.500 280.500h24M347.500 268.500v19M355.500 268.500v19" stroke="#a0a0a0" stroke-width="1.300"/><rect x="339.500" y="264.500" width="24" height="23" fill="none" stroke="#8a8a8a"/><path d="M366 283h11l-5.500 5.500z" fill="#777"/></svg>
<svg width="34" height="34" style="left:390px;top:260px" viewBox="390 260 34 34"><g font-family="Liberation Sans, sans-serif" fill="#d8ece8" font-size="20.500"><text transform="translate(391.600 285.200) scale(0.84 1)">1</text><text transform="translate(400.600 278.100) scale(0.84 1)">2</text><text transform="translate(410.200 290.700) scale(0.84 1)">3</text></g></svg>
<div class="t" style="left:435px;top:264px;height:30px;line-height:30px;font-size:20.800px;letter-spacing:0.1px;font-weight:bold;color:#fff">Column1</div>
<div class="a" style="left:669.500px;top:261px;width:33px;height:32.500px;background:#fff;border:1.500px solid #d3d0ce"></div>
<svg width="20" height="10" style="left:677px;top:273px" viewBox="0 0 20 10"><path d="M2.500 0.800h13.400l-6.700 6.600z" fill="#777"/></svg>
<svg width="36" height="34" style="left:710px;top:260px" viewBox="710 260 36 34"><g font-family="Liberation Sans, sans-serif" fill="#6b6b6b" stroke="#6b6b6b" stroke-width="0.350" font-size="18"><text transform="translate(711.800 283.500) scale(0.95 1)">A</text><text transform="translate(723.600 276.600) scale(0.80 1)">B</text><text transform="translate(730.300 289.600) scale(0.88 1)">C</text></g></svg>
<div class="t" style="left:756px;top:264px;height:30px;line-height:30px;font-size:20.800px;letter-spacing:0.1px;font-weight:bold;color:#605e5c">Column2</div>
<div class="a" style="left:991px;top:261px;width:32px;height:32px;background:#fff;border:1.500px solid #a9a9a9"></div>
<svg width="20" height="10" style="left:997.800px;top:273px" viewBox="0 0 20 10"><path d="M2.500 0.800h13.400l-6.700 6.600z" fill="#777"/></svg>

<!-- ===== right pane ===== -->
<div class="a" style="left:1386px;top:171px;width:2px;height:764px;background:#c8c6c4"></div>
<div class="a" style="left:1434px;top:331px;width:438px;height:45px;background:#fff;border:2px solid #c8c8c8"></div>
<div class="a" style="left:1434px;top:502px;width:438px;height:433px;border:2px solid #c8c8c8"></div>
<div class="a" style="left:1436px;top:745px;width:434px;height:40px;background:#d2d0ce"></div>
<div class="a" style="left:1436px;top:745px;width:4px;height:40px;background:#117865"></div>
<div class="t" style="left:1410px;top:191.5px;height:32px;line-height:32px;font-size:25.8px;letter-spacing:0.22px;color:#5a5958;transform:scaleY(1.07)">Query Settings</div>
<div class="t" style="left:1434.5px;top:256.5px;height:32px;line-height:32px;font-size:21.5px;letter-spacing:0.29px;color:#252423;font-weight:bold;transform:scaleY(1.1)">PROPERTIES</div>
<div class="t" style="left:1433.5px;top:296.5px;height:32px;line-height:32px;font-size:23.2px;letter-spacing:1.03px;color:#252423">Name</div>
<div class="t" style="left:1446.5px;top:340.0px;height:32px;line-height:32px;font-size:21.6px;letter-spacing:0.06px;color:#555;transform:scaleY(1.08)">Sheet2</div>
<div class="t" style="left:1435px;top:392.0px;height:32px;line-height:32px;font-size:23.4px;letter-spacing:0.21px;color:#117865">All Properties</div>
<div class="t" style="left:1434.5px;top:459.5px;height:32px;line-height:32px;font-size:21.6px;letter-spacing:0.24px;color:#252423;font-weight:bold;transform:scaleY(1.1)">APPLIED STEPS</div>
<div class="t" style="left:1479.800px;top:510.0px;height:32px;line-height:32px;font-size:23.4px;letter-spacing:-0.03px;color:#252423">Source</div>
<div class="t" style="left:1479.800px;top:550.1px;height:32px;line-height:32px;font-size:23.4px;letter-spacing:0.58px;color:#252423">Navigation</div>
<div class="t" style="left:1479.800px;top:590.3px;height:32px;line-height:32px;font-size:23.4px;letter-spacing:0.26px;color:#252423">Promoted Headers</div>
<div class="t" style="left:1479.800px;top:630.5px;height:32px;line-height:32px;font-size:23.4px;letter-spacing:0.17px;color:#252423">Changed Type</div>
<div class="t" style="left:1479.800px;top:670.6px;height:32px;line-height:32px;font-size:23.4px;letter-spacing:0.13px;color:#252423">Promoted Headers1</div>
<div class="t" style="left:1479.800px;top:710.8px;height:32px;line-height:32px;font-size:23.4px;letter-spacing:0.27px;color:#252423">Demoted Headers</div>
<div class="t" style="left:1479.800px;top:750.9px;height:32px;line-height:32px;font-size:23.4px;letter-spacing:0.09px;color:#252423">Changed Type1</div>
<svg width="28" height="28" style="left:1842px;top:194px" viewBox="1842 194 28 28"><path d="M1845.500 197.500l21 21M1866.500 197.500l-21 21" fill="none" stroke="#7d7d7d" stroke-width="1.800"/></svg>
<svg width="14" height="14" style="left:1407px;top:264px" viewBox="0 0 14 14"><path d="M12.500 1.500v11h-11z" fill="#555"/></svg>
<svg width="14" height="14" style="left:1407px;top:467px" viewBox="0 0 14 14"><path d="M12.500 1.500v11h-11z" fill="#555"/></svg>
<svg width="24" height="22" style="left:1448px;top:755px" viewBox="1448 755 24 22"><g fill="#6e6c6a"><path d="M1450 758.600L1452.400 756.400L1470.200 773L1469.400 773.800z"/><circle cx="1451.400" cy="757.700" r="2"/><path d="M1452.300 774.400L1449.900 772L1469 757L1469.800 757.800z"/><circle cx="1451.300" cy="773" r="2"/></g></svg>
<svg width="24" height="24" style="left:1831px;top:512.0px" viewBox="-12 -12 24 24"><g fill="#b7b7b7"><circle r="7.600"/><rect x="-11.200" y="-2.700" width="22.400" height="5.400" rx="1.200"/><rect x="-11.200" y="-2.700" width="22.400" height="5.400" rx="1.200" transform="rotate(60)"/><rect x="-11.200" y="-2.700" width="22.400" height="5.400" rx="1.200" transform="rotate(120)"/><circle r="3.700" fill="#f3f2f1"/></g></svg>
<svg width="24" height="24" style="left:1831px;top:552.1px" viewBox="-12 -12 24 24"><g fill="#b7b7b7"><circle r="7.600"/><rect x="-11.200" y="-2.700" width="22.400" height="5.400" rx="1.200"/><rect x="-11.200" y="-2.700" width="22.400" height="5.400" rx="1.200" transform="rotate(60)"/><rect x="-11.200" y="-2.700" width="22.400" height="5.400" rx="1.200" transform="rotate(120)"/><circle r="3.700" fill="#f3f2f1"/></g></svg>
<svg width="24" height="24" style="left:1831px;top:592.3px" viewBox="-12 -12 24 24"><g fill="#b7b7b7"><circle r="7.600"/><rect x="-11.200" y="-2.700" width="22.400" height="5.400" rx="1.200"/><rect x="-11.200" y="-2.700" width="22.400" height="5.400" rx="1.200" transform="rotate(60)"/><rect x="-11.200" y="-2.700" width="22.400" height="5.400" rx="1.200" transform="rotate(120)"/><circle r="3.700" fill="#f3f2f1"/></g></svg>
<svg width="24" height="24" style="left:1831px;top:672.6px" viewBox="-12 -12 24 24"><g fill="#b7b7b7"><circle r="7.600"/><rect x="-11.200" y="-2.700" width="22.400" height="5.400" rx="1.200"/><rect x="-11.200" y="-2.700" width="22.400" height="5.400" rx="1.200" transform="rotate(60)"/><rect x="-11.200" y="-2.700" width="22.400" height="5.400" rx="1.200" transform="rotate(120)"/><circle r="3.700" fill="#f3f2f1"/></g></svg>

<!-- ===== manage dropdown menu ===== -->
<div class="a" style="left:488.800px;top:140.800px;width:129.200px;height:83.700px;background:#fbfbfb;border:1px solid #cfcfcf;border-radius:2px;box-shadow:1.500px 2px 2px rgba(0,0,0,0.09);z-index:5"></div>
<div class="a" style="left:520px;top:142px;width:1px;height:81px;background:#e2e2e2;z-index:6"></div>
<div class="a" style="left:490.700px;top:169px;width:125.300px;height:27px;background:#f2f2f2;border:1px solid #d0d0d0;z-index:7"></div>
<div class="t r" style="left:528.500px;top:145.5px;z-index:8;font-size:12.800px;letter-spacing:0.25px">Delete</div>
<div class="t r" style="left:528.500px;top:172.5px;z-index:8;font-size:12.800px;letter-spacing:0.18px">Duplicate</div>
<div class="t r" style="left:528.500px;top:199.5px;z-index:8;font-size:12.800px;letter-spacing:0.05px">Reference</div>
<svg width="128" height="84" style="left:490px;top:141px;z-index:8" viewBox="490 141 128 84">
<path d="M499.500 150.500l10.500 9.500M510.500 150l-11 10.500" fill="none" stroke="#5a5a5a" stroke-width="1.700"/>
<path d="M496.500 173.500h5.500l3 3v10h-8.500z" fill="#fff" stroke="#8a8a8a" stroke-width="1"/>
<path d="M502 173.500v3h3" fill="none" stroke="#8a8a8a"/>
<path d="M498.500 177.500h3M498.500 180.500h4" stroke="#4a7db8" stroke-width="1"/>
<path d="M503.500 178.500h5.500l3.500 3v9h-9z" fill="#fff" stroke="#8a8a8a" stroke-width="1"/>
<path d="M509 178.500v3h3.500" fill="none" stroke="#8a8a8a"/>
<path d="M505.500 183.500h4M505.500 185.500h5M505.500 187.500h5" stroke="#4a7db8" stroke-width="1"/>
<rect x="496.300" y="204.200" width="12.400" height="7.500" rx="3.750" fill="none" stroke="#444" stroke-width="1.300"/>
<rect x="501.800" y="206.700" width="12.400" height="7.500" rx="3.750" fill="#fbfbfb" stroke="#444" stroke-width="1.300"/>
<path d="M501.800 210.300a3.750 3.750 0 0 0 3.100 1.400h0.600" fill="none" stroke="#444" stroke-width="1.300"/>
<path d="M508.700 208a3.750 3.750 0 0 0 -3.750 -3.750" fill="none" stroke="#444" stroke-width="0"/>
</svg>

<!-- ===== red annotations ===== -->
<svg width="1920" height="935" style="left:0;top:0;z-index:20;pointer-events:none" viewBox="0 0 1920 935">
<path d="M161.600 261.500C162.500 266 164.500 274 167 278.500C169 281.500 173 282 178 280C186 276.500 196 268 204.700 262C207.500 260.200 210 259.500 212.400 259.100" fill="none" stroke="#e61a1c" stroke-width="4.800" stroke-linecap="round" stroke-linejoin="round"/>
<path d="M592.300 178.200C593.500 181.500 595.500 185 598 187.300C600.500 190 603.500 191 607 190C612 188.500 623 181.500 633.500 176.700" fill="none" stroke="#e61a1c" stroke-width="4.600" stroke-linecap="round" stroke-linejoin="round"/>
<path d="M1717 497v287" fill="none" stroke="#e61a1c" stroke-width="4.800" stroke-linecap="round"/>
</svg>

</body>
</html>
